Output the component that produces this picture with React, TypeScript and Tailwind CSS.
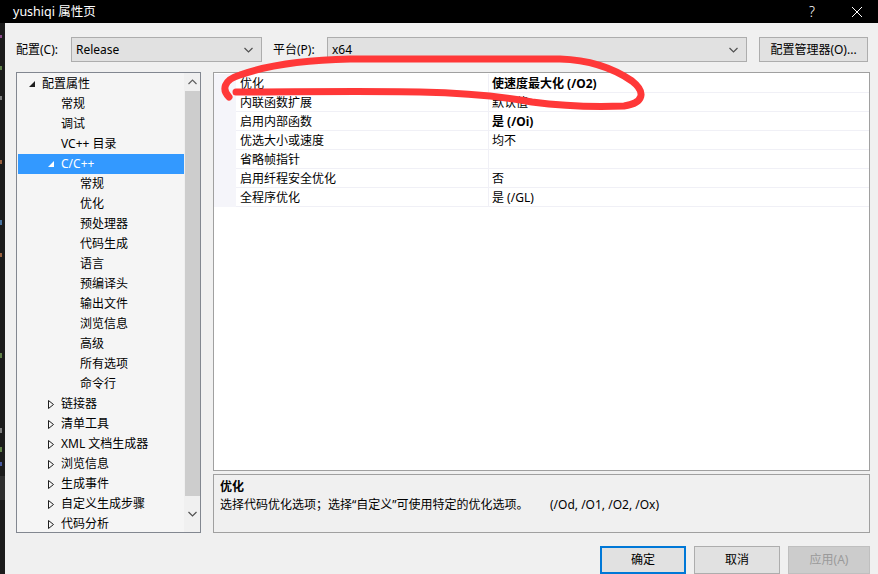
import React from 'react';

type TreeItem = {
  label: string;
  level: 0 | 1 | 2;
  icon?: 'open' | 'closed';
  selected?: boolean;
};

const tree: TreeItem[] = [
  { label: '配置属性', level: 0, icon: 'open' },
  { label: '常规', level: 1 },
  { label: '调试', level: 1 },
  { label: 'VC++ 目录', level: 1 },
  { label: 'C/C++', level: 1, icon: 'open', selected: true },
  { label: '常规', level: 2 },
  { label: '优化', level: 2 },
  { label: '预处理器', level: 2 },
  { label: '代码生成', level: 2 },
  { label: '语言', level: 2 },
  { label: '预编译头', level: 2 },
  { label: '输出文件', level: 2 },
  { label: '浏览信息', level: 2 },
  { label: '高级', level: 2 },
  { label: '所有选项', level: 2 },
  { label: '命令行', level: 2 },
  { label: '链接器', level: 1, icon: 'closed' },
  { label: '清单工具', level: 1, icon: 'closed' },
  { label: 'XML 文档生成器', level: 1, icon: 'closed' },
  { label: '浏览信息', level: 1, icon: 'closed' },
  { label: '生成事件', level: 1, icon: 'closed' },
  { label: '自定义生成步骤', level: 1, icon: 'closed' },
  { label: '代码分析', level: 1, icon: 'closed' },
];

const levelPad: Record<TreeItem['level'], string> = {
  0: 'pl-[11px]',
  1: 'pl-[30px]',
  2: 'pl-[49px]',
};

const props: { name: string; value: string; bold?: boolean }[] = [
  { name: '优化', value: '使速度最大化 (/O2)', bold: true },
  { name: '内联函数扩展', value: '默认值' },
  { name: '启用内部函数', value: '是 (/Oi)', bold: true },
  { name: '优选大小或速度', value: '均不' },
  { name: '省略帧指针', value: '' },
  { name: '启用纤程安全优化', value: '否' },
  { name: '全程序优化', value: '是 (/GL)' },
];

const Chevron = ({ up }: { up?: boolean }) => (
  <svg width="9" height="6" viewBox="0 0 9 6" className="shrink-0">
    <polyline
      points={up ? '0.5,5 4.5,1 8.5,5' : '0.5,1 4.5,5 8.5,1'}
      fill="none"
      stroke={up ? '#606060' : '#505050'}
      strokeWidth="1.2"
    />
  </svg>
);

const Triangle = ({ kind, white }: { kind: 'open' | 'closed'; white?: boolean }) =>
  kind === 'open' ? (
    <svg width="6" height="6" viewBox="0 0 6 6">
      <polygon points="6,0 6,6 0,6" fill={white ? '#ffffff' : '#1e1e1e'} />
    </svg>
  ) : (
    <svg width="6" height="9" viewBox="0 0 6 9">
      <polygon points="0.5,0.5 5.5,4.5 0.5,8.5" fill="none" stroke="#1e1e1e" strokeWidth="1" />
    </svg>
  );

const Select = ({ value, width }: { value: string; width: string }) => (
  <div className={`flex h-[25px] ${width} items-center justify-between border border-[#adadad] bg-[#e1e1e1] pl-[4px] pr-[8px]`}>
    <span>{value}</span>
    <Chevron />
  </div>
);

export default function App() {
  return (
    <div className="relative h-[574px] w-[878px] overflow-hidden bg-[#f0f0f0] font-['Noto_Sans','Noto_Sans_CJK_SC',sans-serif] text-[12px] leading-[20px] text-black">
      {/* title bar */}
      <div className="flex h-[23px] items-center bg-black pl-[13px] text-[12.5px] text-white">
        <span className="flex-1">yushiqi 属性页</span>
        <span className="mr-[36px] text-[14px] font-light">?</span>
        <svg width="12" height="12" viewBox="0 0 12 12" className="mr-[15px]">
          <path d="M1 1 L11 11 M11 1 L1 11" stroke="#ffffff" strokeWidth="1" />
        </svg>
      </div>

      <div className="flex h-[551px]">
        {/* background editor edge */}
        <div className="flex w-[5px] flex-col bg-[#1b1b1b]">
          <div className="mt-[12px] h-[3px] w-[2px] bg-[#8a4a8a]" />
          <div className="mt-[28px] h-[4px] w-[2px] bg-[#5f7f48]" />
          <div className="mt-[26px] h-[4px] w-[2px] bg-[#7c7c7c]" />
          <div className="mt-[60px] h-[4px] w-[2px] bg-[#98603f]" />
          <div className="mt-[56px] h-[5px] w-[2px] bg-[#48729e]" />
          <div className="mt-[28px] h-[4px] w-[2px] bg-[#98603f]" />
          <div className="mt-[96px] h-[5px] w-[2px] bg-[#5f7f48]" />
          <div className="mt-[70px] h-[5px] w-[2px] bg-[#7c7c7c]" />
          <div className="mt-[14px] h-[5px] w-[2px] bg-[#5f7f48]" />
          <div className="mt-[10px] h-[4px] w-[2px] bg-[#48589e]" />
          <div className="mt-[10px] h-[24px] w-[5px] bg-[#2e2e2e]" />
        </div>

        <div className="flex flex-1 flex-col">
          {/* configuration row */}
          <div className="mt-[14px] flex h-[25px] items-center pl-[11px]">
            <span className="w-[55px]">配置(C):</span>
            <Select value="Release" width="w-[191px]" />
            <span className="ml-[11px] w-[54px]">平台(P):</span>
            <Select value="x64" width="w-[420px]" />
            <div className="ml-[12px] flex h-[25px] w-[109px] items-center justify-center border border-[#adadad] bg-[#e1e1e1]">
              配置管理器(O)...
            </div>
          </div>

          {/* tree + grid */}
          <div className="mt-[10px] flex pl-[11px]">
            <div className="flex h-[461px] w-[185px] border border-[#828790] bg-[#f5f5f5]">
              <div className="flex-1 overflow-hidden pt-[1px]">
                {tree.map((item, i) => (
                  <div
                    key={i}
                    className={`ml-[1px] flex h-[20px] items-center ${levelPad[item.level]} ${
                      item.selected ? 'bg-[#3399ff] text-white' : ''
                    }`}
                  >
                    <span className="flex w-[13px] items-center">
                      {item.icon && <Triangle kind={item.icon} white={item.selected} />}
                    </span>
                    <span className="whitespace-nowrap">{item.label}</span>
                  </div>
                ))}
              </div>
              <div className="flex w-[16px] flex-col items-center bg-[#f0f0f0]">
                <div className="flex h-[18px] items-center">
                  <Chevron up />
                </div>
                <div className="h-[405px] w-[15px] bg-[#cdcdcd]" />
                <div className="flex flex-1 items-center">
                  <Chevron />
                </div>
              </div>
            </div>

            <div className="ml-[12px] flex w-[657px] flex-col">
              <div className="h-[399px] border border-[#a0a0a0] bg-white pt-[1px]">
                {props.map((p) => (
                  <div key={p.name} className="flex h-[19px]">
                    <div className="w-[22px] bg-[#f5f5fa]" />
                    <div className="w-[252px] border-b border-[#f0f0f6] pl-[4px] leading-[19px]">{p.name}</div>
                    <div
                      className={`flex-1 border-b border-l border-[#f0f0f6] pl-[3px] leading-[19px] ${
                        p.bold ? 'font-bold' : ''
                      }`}
                    >
                      {p.value}
                    </div>
                  </div>
                ))}
              </div>
              <div className="mt-[3px] h-[59px] border border-[#a0a0a0] bg-[#f0f0f0] px-[6px] pt-[3px] leading-[18px]">
                <div className="font-bold">优化</div>
                <div className="flex">
                  <span className="w-[330px]">选择代码优化选项；选择“自定义”可使用特定的优化选项。</span>
                  <span>(/Od, /O1, /O2, /Ox)</span>
                </div>
              </div>
            </div>
          </div>

          {/* dialog buttons */}
          <div className="mt-[13px] flex justify-end gap-[8px] pr-[8px]">
            <div className="flex h-[28px] w-[86px] items-center justify-center border-2 border-[#0078d7] bg-[#e1e1e1]">确定</div>
            <div className="flex h-[28px] w-[86px] items-center justify-center border border-[#adadad] bg-[#e1e1e1]">取消</div>
            <div className="flex h-[28px] w-[82px] items-center justify-center border border-[#bfbfbf] bg-[#cccccc] text-[#9a9a9a]">
              应用(A)
            </div>
          </div>
        </div>
      </div>

      {/* red hand-drawn annotation */}
      <svg className="pointer-events-none absolute left-0 top-0" width="878" height="574" viewBox="0 0 878 574">
        <path
          d="M229,97 C222,90 223,80 240,75 C265,66 300,60 350,59 L560,59 C592,60 616,70 632,81 C646,92 644,103 624,106 C598,107 562,106 532,102 C500,96 462,93 420,92 C360,91 292,92 236,92"
          fill="none"
          stroke="#ff3838"
          strokeWidth="7"
          strokeLinecap="round"
          strokeLinejoin="round"
        />
      </svg>
    </div>
  );
}
